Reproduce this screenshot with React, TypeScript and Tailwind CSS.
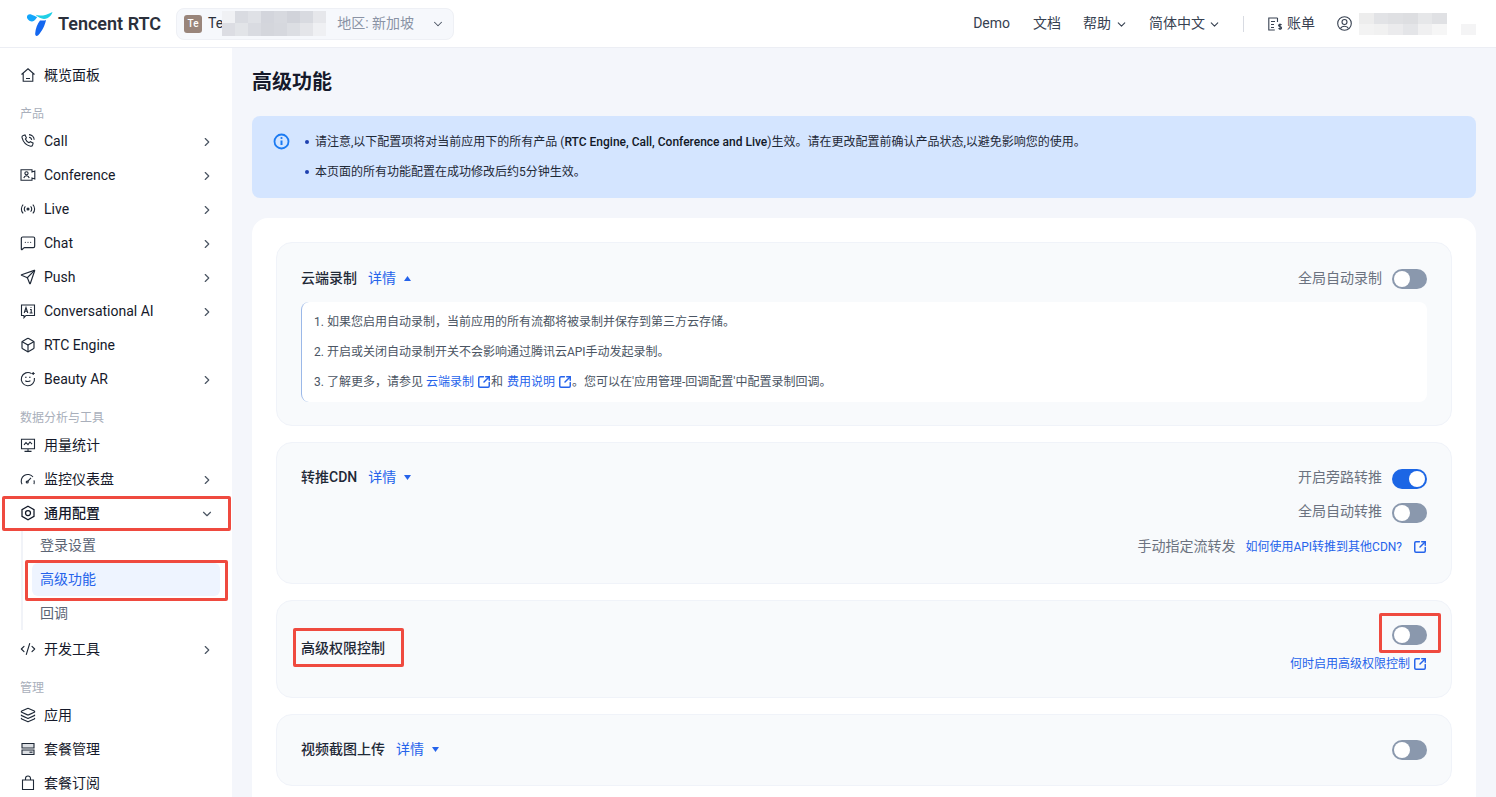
import type { ReactNode } from 'react';
import {
    Box,
    ChevronDown,
    ChevronRight,
    CodeXml,
    Layers,
    MessageSquareMore,
    Send,
    SquareArrowOutUpRight,
} from 'lucide-react';

const iconProps = { size: 16, strokeWidth: 1.75, className: 'text-[#1f2937]' };

function Svg({ children }: { children: ReactNode }) {
    return (
        <svg width="16" height="16" viewBox="0 0 16 16" fill="none" stroke="#1f2937" strokeWidth="1.1">
            {children}
        </svg>
    );
}

const HomeIcon = () => (
    <Svg>
        <path d="M1.500 7.500 8 1.800l6.500 5.700M3.200 6.500v7.700h9.600V6.500M6 11.500h4" />
    </Svg>
);
const CallIcon = () => (
    <Svg>
        <path d="M3.200 2.500 5 2l1.400 2.800-1 1.200c.7 1.700 2.100 3 3.700 3.700l1.200-1 2.800 1.400-.5 1.900c-.3.900-1.200 1.400-2.100 1.200C6 12.200 3.200 9 2 4.600c-.2-.9.300-1.800 1.200-2.100z" />
        <path d="M9 1.600a5.500 5.500 0 0 1 5.200 5.200M9 4.200a3 3 0 0 1 2.700 2.700" />
    </Svg>
);
const ConferenceIcon = () => (
    <Svg>
        <path d="M12 5V2.800H1v10.400h11V11l2.800 1V4z" />
        <circle cx="6.500" cy="6.300" r="1.600" />
        <path d="M3.800 11c.4-1.600 1.400-2.200 2.700-2.200s2.300.6 2.700 2.200" />
    </Svg>
);
const LiveIcon = () => (
    <Svg>
        <circle cx="8" cy="8" r="1" fill="#1f2937" />
        <path d="M5.400 5.400a3.600 3.600 0 0 0 0 5.200M10.600 5.400a3.600 3.600 0 0 1 0 5.200M3.200 3.600a6.200 6.200 0 0 0 0 8.800M12.800 3.600a6.200 6.200 0 0 1 0 8.800" />
    </Svg>
);
const AiIcon = () => (
    <Svg>
        <path d="M1.500 2h13v10.500H6L4 14.700v-2.200H1.500z" />
        <path d="M4.200 10 6 4.600 7.800 10M4.800 8.200h2.400M10 6.500h1.200V10M9.600 10h3M11 4.200v.8" />
    </Svg>
);
const BeautyIcon = () => (
    <Svg>
        <path d="M11.500 2.600A6.600 6.600 0 1 0 14.400 7" />
        <path d="M5 6.200h1.600M9 6.200h1.600M5.400 9.600c.7 1.200 4.200 1.200 5 0" />
        <path d="M13.200 1v3M11.700 2.500h3" />
    </Svg>
);
const UsageIcon = () => (
    <Svg>
        <path d="M1.500 2.200h13v9.600h-13zM8 11.800v2.600M4.500 14.400h7" />
        <path d="m4 7.800 2-2.200 2 2 2-2.600 2 2.200" />
    </Svg>
);
const MonitorIcon = () => (
    <Svg>
        <path d="M2 13.200a6.600 6.600 0 0 1 11-7.200M14 9.400a6.600 6.600 0 0 1 0 3.800" />
        <path d="m7.500 10.600 3.500-3.800" />
        <circle cx="7.200" cy="11" r="1" />
    </Svg>
);
const SettingsIcon = () => (
    <svg width="16" height="16" viewBox="0 0 16 16" fill="none" stroke="#111827" strokeWidth="1.25">
        <path d="M8 1.200 14 4.600v6.800l-6 3.400-6-3.400V4.600z" />
        <circle cx="8" cy="8" r="2.500" />
    </svg>
);
const PlanIcon = () => (
    <Svg>
        <path d="M2 2.500h12v4.500H2zM2 9h12v4.500H2z" fill="#9ca3af" fillOpacity="0.35" />
        <path d="M9.500 11.200h3" />
    </Svg>
);
const BagIcon = () => (
    <Svg>
        <path d="M2.500 5h11v9.500h-11zM5.500 5V3.500a2.500 2.500 0 0 1 5 0V5" />
    </Svg>
);
const BillIcon = () => (
    <svg width="16" height="16" viewBox="0 0 16 16" fill="none" stroke="#374151" strokeWidth="1.1">
        <path d="M10.500 2H1.800v12h6M10.500 2v4M4 5.500h4M4 8.500h3M4 11.500h3" />
        <path d="M14.500 9c-.4-.8-2.800-1-2.900.4 0 1.500 3 .9 3 2.500 0 1.400-2.600 1.300-3.100.3M13 7.500V14" />
    </svg>
);
const UserIcon = () => (
    <svg width="15" height="15" viewBox="0 0 15 15" fill="none" stroke="#374151" strokeWidth="1.1">
        <circle cx="7.500" cy="7.500" r="6.800" />
        <circle cx="7.500" cy="6" r="2.500" />
        <path d="M3.500 12.500c.7-1.600 2.200-2.300 4-2.300s3.300.7 4 2.300" />
    </svg>
);
const InfoIcon = () => (
    <svg width="17" height="17" viewBox="0 0 17 17" fill="none" stroke="#1c7bf2" strokeWidth="1.800">
        <circle cx="8.500" cy="8.500" r="7" />
        <path d="M8.500 7.500v4.500" strokeWidth="2" />
        <circle cx="8.500" cy="5" r="1.100" fill="#1c7bf2" stroke="none" />
    </svg>
);

const TencentLogo = () => (
    <svg width="28" height="26" viewBox="0 0 28 26">
        <path d="M1 5.500C1.500 3.500 3.500 3 5.200 3.600c2.500.8 4 1.800 6 2.400-1.400 2.200-3 4.600-5.400 4.400C3.400 10.200.5 8 1 5.500z" fill="#12a5fb" />
        <path d="M9.500 3.800C14 5.500 20 4.500 26.500 1c-.5 2.400-2.500 5-5.200 6.200-3.400 1.500-8 .6-11.800-3.400z" fill="#1fd0e6" />
        <path d="M14 9.500c2.800.3 5 0 6-.5-1 5.200-4 11.500-8 15.500-1.500.9-3 .5-2.800-2 .2-4.400 2.200-9.600 4.800-13z" fill="#1467f0" />
    </svg>
);

type MenuItem = { icon: ReactNode; label: string; arrow?: boolean };

const productItems: MenuItem[] = [
    { icon: <CallIcon />, label: 'Call', arrow: true },
    { icon: <ConferenceIcon />, label: 'Conference', arrow: true },
    { icon: <LiveIcon />, label: 'Live', arrow: true },
    { icon: <MessageSquareMore {...iconProps} />, label: 'Chat', arrow: true },
    { icon: <Send {...iconProps} />, label: 'Push', arrow: true },
    { icon: <AiIcon />, label: 'Conversational AI', arrow: true },
    { icon: <Box {...iconProps} />, label: 'RTC Engine' },
    { icon: <BeautyIcon />, label: 'Beauty AR', arrow: true },
];

const manageItems: MenuItem[] = [
    { icon: <Layers {...iconProps} />, label: '应用' },
    { icon: <PlanIcon />, label: '套餐管理' },
    { icon: <BagIcon />, label: '套餐订阅' },
];

const appMosaic = ['#f0f1f4', '#d9dbe1', '#dfe1e6', '#d3d5dc', '#d7d9df', '#d1d3da', '#d8dae0', '#e6e7eb', '#dcdde3', '#e2e4e8', '#d9dbe1', '#d4d6dc', '#d6d8de', '#dcdee3', '#e4e5e9', '#eff0f3'];
const userMosaic = ['#ededed', '#e2e3e6', '#dfe0e3', '#dddee1', '#e6e7e9', '#e0e1e4', '#ffffff', '#ffffff', '#f3f3f3', '#f1f1f1', '#ebebed', '#e4e5e8', '#f0f0f1', '#f6f6f6', '#ffffff', '#f4f4f5'];

function Mosaic({ colors, cell, rows }: { colors: string[]; cell: string; rows: string }) {
    return (
        <div className={`grid grid-cols-8 ${cell} ${rows}`}>
            {colors.map((color, index) => (
                <div key={index} style={{ backgroundColor: color }} />
            ))}
        </div>
    );
}

function MenuRow({ icon, label, arrow }: MenuItem) {
    return (
        <div className="flex h-[34px] items-center pl-[20px] pr-[18px] text-[14px] text-[#15192a]">
            <span className="flex w-[24px] shrink-0 items-center">{icon}</span>
            <span className="flex-1">{label}</span>
            {arrow && <ChevronRight size={14} strokeWidth={2} className="mt-[2px] text-[#4b5563]" />}
        </div>
    );
}

function GroupLabel({ children }: { children: ReactNode }) {
    return (
        <div className="flex h-[32px] items-end pb-[2px] pl-[20px] text-[12px] leading-[16px] text-[#a9afbb]">
            {children}
        </div>
    );
}

function Sidebar() {
    return (
        <aside className="h-full w-[232px] shrink-0 overflow-hidden bg-white pt-[10px]">
            <MenuRow icon={<HomeIcon />} label="概览面板" />
            <GroupLabel>产品</GroupLabel>
            {productItems.map((item) => (
                <MenuRow key={item.label} {...item} />
            ))}
            <GroupLabel>数据分析与工具</GroupLabel>
            <MenuRow icon={<UsageIcon />} label="用量统计" />
            <MenuRow icon={<MonitorIcon />} label="监控仪表盘" arrow />
            <div className="relative flex h-[34px] items-center pl-[20px] pr-[18px] text-[14px] font-medium text-[#15192a]">
                <span className="flex w-[24px] shrink-0 items-center">
                    <SettingsIcon />
                </span>
                <span className="flex-1">通用配置</span>
                <ChevronDown size={14} strokeWidth={2} className="mt-[2px] text-[#4b5563]" />
                <div className="absolute left-[2px] right-[1px] top-0 -bottom-[1px] rounded-[2px] border-[3px] border-[#ef4a3f]" />
            </div>
            <div className="mb-[2px] ml-[21px] mt-[-2px] border-l-2 border-[#f1f3f8] pl-[9px] pr-[12px] text-[14px]">
                <div className="flex h-[34px] items-center px-[8px] text-[#5b6474]">登录设置</div>
                <div className="relative flex h-[34px] items-center">
                    <div className="flex h-[33px] w-full items-center rounded-[6px] bg-[#eef4ff] px-[8px] text-[#2563eb]">
                        高级功能
                    </div>
                    <div className="absolute -left-[7px] -right-[8px] -top-[2px] -bottom-[5px] rounded-[2px] border-[3px] border-[#ef4a3f]" />
                </div>
                <div className="flex h-[34px] items-center px-[8px] text-[#5b6474]">回调</div>
            </div>
            <MenuRow icon={<CodeXml {...iconProps} />} label="开发工具" arrow />
            <GroupLabel>管理</GroupLabel>
            {manageItems.map((item) => (
                <MenuRow key={item.label} {...item} />
            ))}
        </aside>
    );
}

function Header() {
    return (
        <header className="flex h-[48px] shrink-0 items-center border-b border-[#eceef4] bg-white pl-[26px] pr-[20px]">
            <TencentLogo />
            <span className="ml-[4px] text-[18px] font-semibold text-[#2b303b]">Tencent RTC</span>
            <div className="relative ml-[15px] flex h-[32px] w-[278px] items-center rounded-[8px] border border-[#eef0f5] bg-[#f6f8fc] pl-[7px] text-[14px]">
                <span className="flex h-[18px] w-[18px] items-center justify-center rounded-[3px] bg-[#99857b] text-[10px] font-medium text-white">
                    Te
                </span>
                <span className="ml-[6px] text-[#2b303b]">Te</span>
                <div className="absolute left-[45px] top-[2px]">
                    <Mosaic colors={appMosaic} cell="w-[104px]" rows="h-[25px] grid-rows-2" />
                </div>
                <span className="ml-[114px] text-[#8a93a5]">地区: 新加坡</span>
                <ChevronDown size={14} strokeWidth={1.75} className="ml-[17px] text-[#4b5563]" />
            </div>
            <nav className="ml-auto flex items-center text-[14px] text-[#374151]">
                <span>Demo</span>
                <span className="ml-[23px]">文档</span>
                <span className="ml-[22px]">帮助</span>
                <ChevronDown size={13} strokeWidth={2} className="ml-[4px] mt-[2px]" />
                <span className="ml-[21px]">简体中文</span>
                <ChevronDown size={13} strokeWidth={2} className="ml-[3px] mt-[2px]" />
                <span className="ml-[22px] h-[16px] w-px bg-[#d8dbe2]" />
                <span className="ml-[23px]">
                    <BillIcon />
                </span>
                <span className="ml-[4px]">账单</span>
                <span className="ml-[22px]">
                    <UserIcon />
                </span>
                <div className="ml-[7px]">
                    <Mosaic colors={userMosaic} cell="w-[117px]" rows="h-[22px] grid-rows-2" />
                </div>
            </nav>
        </header>
    );
}

function Toggle({ on }: { on?: boolean }) {
    return (
        <span
            className={`flex h-[20px] w-[35px] shrink-0 items-center rounded-full px-[2px] ${on ? 'justify-end bg-[#1c66e5]' : 'justify-start bg-[#8a98ad]'}`}
        >
            <span className="h-[16px] w-[16px] rounded-full bg-white" />
        </span>
    );
}

function DetailLink({ up }: { up?: boolean }) {
    return (
        <span className="ml-[11px] flex items-center text-[14px] font-normal text-[#2563eb]">
            详情
            <svg width="7" height="5" viewBox="0 0 7 5" className="ml-[8px]" fill="#2563eb">
                <path d={up ? 'M3.500 0 7 5H0z' : 'M0 0h7L3.500 5z'} />
            </svg>
        </span>
    );
}

function OutLink({ children }: { children?: ReactNode }) {
    return (
        <span className="inline-flex items-center text-[#2563eb]">
            {children}
            <SquareArrowOutUpRight size={14} strokeWidth={2.5} className="ml-[3px]" />
        </span>
    );
}

function Section({ className, children }: { className: string; children: ReactNode }) {
    return (
        <section className={`rounded-[16px] border border-[#f0f3f9] bg-[#f8fafc] px-[24px] ${className}`}>
            {children}
        </section>
    );
}

function Content() {
    return (
        <main className="h-full flex-1 overflow-hidden bg-[#f4f6fb] px-[20px]">
            <h1 className="flex h-[68px] items-center text-[20px] font-semibold text-[#15192a]">高级功能</h1>
            <div className="flex h-[82px] rounded-[8px] bg-[#d4e5ff] pl-[21px] pt-[16px] text-[12px] text-[#1f2937]">
                <span className="mt-[1px] shrink-0">
                    <InfoIcon />
                </span>
                <ul className="ml-[15px]">
                    <li className="flex h-[20px] items-center">
                        <span className="mr-[6px] h-[4px] w-[4px] rounded-full bg-[#1e40af]" />
                        请注意,以下配置项将对当前应用下的所有产品 (<span className="font-medium text-[#111827]">RTC Engine, Call, Conference and Live</span>)生效。请在更改配置前确认产品状态,以避免影响您的使用。
                    </li>
                    <li className="mt-[10px] flex h-[20px] items-center">
                        <span className="mr-[6px] h-[4px] w-[4px] rounded-full bg-[#1e40af]" />
                        本页面的所有功能配置在成功修改后约5分钟生效。
                    </li>
                </ul>
            </div>
            <div className="mt-[20px] flex flex-col gap-[16px] rounded-t-[16px] bg-white px-[24px] pt-[24px] pb-[24px]">
                <Section className="h-[184px] pt-[26px]">
                    <div className="flex h-[20px] items-center text-[14px] font-medium text-[#1f2937]">
                        <span className="mb-[2px] flex items-center">
                            云端录制
                            <DetailLink up />
                        </span>
                        <span className="mb-[2px] ml-auto font-normal text-[#6b7280]">全局自动录制</span>
                        <span className="ml-[10px]"><Toggle /></span>
                    </div>
                    <div className="mt-[13px] h-[100px] rounded-[8px] border-l border-[#9bb8e8] bg-white pl-[12px] pt-[10px] text-[12px] leading-[20px] text-[#4b5563]">
                        <p>1. 如果您启用自动录制，当前应用的所有流都将被录制并保存到第三方云存储。</p>
                        <p className="mt-[10px]">2. 开启或关闭自动录制开关不会影响通过腾讯云API手动发起录制。</p>
                        <p className="mt-[10px] flex items-center">
                            3. 了解更多，请参见&nbsp;<OutLink>云端录制</OutLink>和&nbsp;<span className="ml-[1px]"><OutLink>费用说明</OutLink></span>。您可以在'应用管理-回调配置'中配置录制回调。
                        </p>
                    </div>
                </Section>
                <Section className="flex h-[142px] justify-between pt-[26px]">
                    <div className="flex h-[20px] items-center text-[14px] font-medium text-[#1f2937]">
                        <span className="mb-[4px] flex items-center">
                            转推CDN
                            <DetailLink />
                        </span>
                    </div>
                    <div className="flex flex-col items-end text-[14px] text-[#6b7280]">
                        <div className="flex h-[20px] items-center">
                            <span className="mb-[4px]">开启旁路转推</span>
                            <span className="ml-[10px]"><Toggle on /></span>
                        </div>
                        <div className="mt-[14px] flex h-[20px] items-center">
                            <span className="mb-[4px]">全局自动转推</span>
                            <span className="ml-[10px]"><Toggle /></span>
                        </div>
                        <div className="mt-[13px] flex h-[20px] items-center">
                            手动指定流转发
                            <span className="ml-[10px] flex pt-[2px] text-[12px]"><OutLink>如何使用API转推到其他CDN?<span className="w-[8px]" /></OutLink></span>
                        </div>
                    </div>
                </Section>
                <Section className="flex h-[98px] items-center justify-between">
                    <div className="relative mb-[2px] text-[14px] font-medium leading-[20px] text-[#1f2937]">
                        高级权限控制
                        <div className="absolute -left-[8px] -right-[19px] -top-[10px] -bottom-[9px] rounded-[2px] border-[3px] border-[#ef4a3f]" />
                    </div>
                    <div className="flex flex-col items-end self-start pt-[24px]">
                        <div className="relative">
                            <Toggle />
                            <div className="absolute -left-[13px] -right-[14px] -top-[12px] -bottom-[8px] rounded-[2px] border-[3px] border-[#ef4a3f]" />
                        </div>
                        <div className="mt-[9px] h-[20px] text-[12px] leading-[20px]">
                            <OutLink>何时启用高级权限控制</OutLink>
                        </div>
                    </div>
                </Section>
                <Section className="flex h-[72px] items-center justify-between">
                    <div className="mb-[2px] flex items-center text-[14px] font-medium text-[#1f2937]">
                        视频截图上传
                        <DetailLink />
                    </div>
                    <Toggle />
                </Section>
            </div>
        </main>
    );
}

export default function App() {
    return (
        <div className="flex h-screen flex-col overflow-hidden font-['Roboto','Noto_Sans_CJK_SC',sans-serif]">
            <Header />
            <div className="flex min-h-0 flex-1">
                <Sidebar />
                <Content />
            </div>
        </div>
    );
}
